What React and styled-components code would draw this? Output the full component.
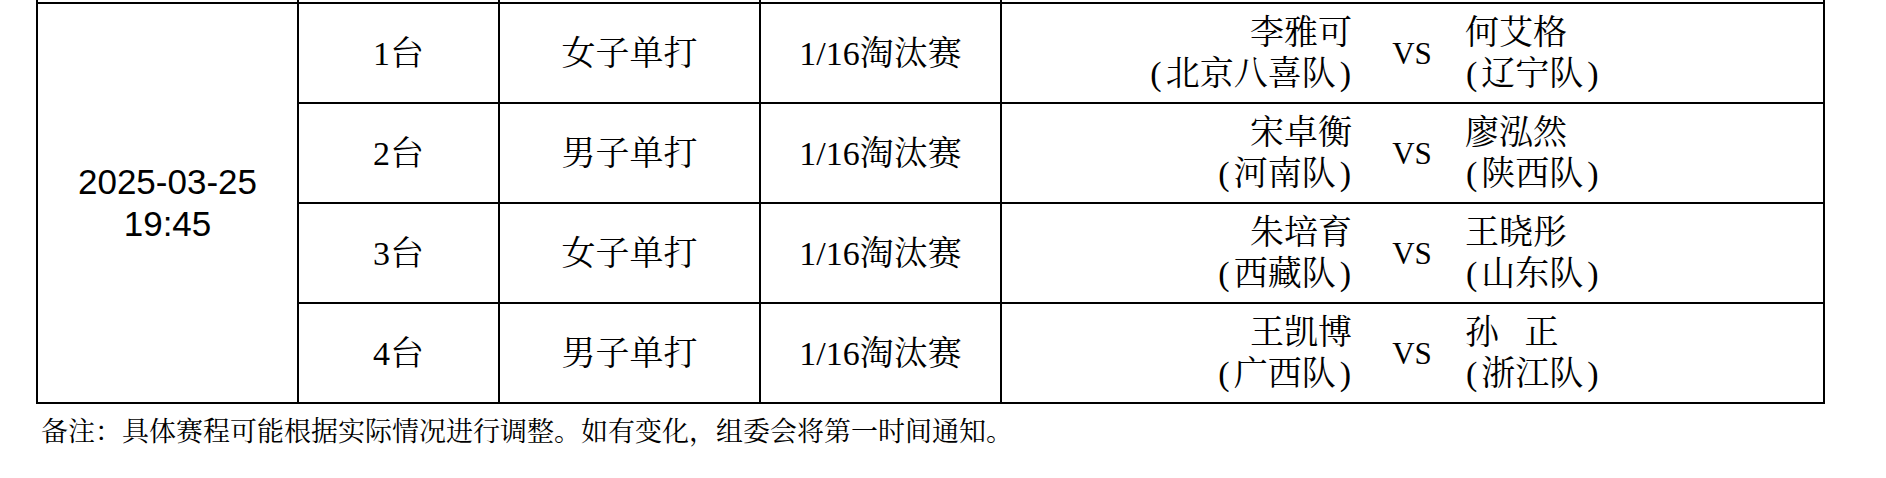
import React from 'react';
import styled, { createGlobalStyle } from 'styled-components';

const GlobalStyle = createGlobalStyle`
  html, body {
    margin: 0;
    padding: 0;
    background: #ffffff;
  }
`;

const Page = styled.div`
  width: 1886px;
  height: 478px;
  padding-left: 36px;
  box-sizing: border-box;
  color: #000;
  font-family: "Liberation Serif", "Noto Serif CJK SC", "Noto Sans CJK SC", serif;
`;

const Table = styled.table`
  border-collapse: collapse;
  table-layout: fixed;
  width: 1789px;
`;

const Cell = styled.td`
  border: 2px solid #000;
  border-top: ${(p) => (p.$stub ? 'none' : '2px solid #000')};
  border-left: ${(p) => (p.$joinLeft ? 'none' : '2px solid #000')};
  border-right: ${(p) => (p.$joinRight ? 'none' : '2px solid #000')};
  padding: 0;
  height: ${(p) => (p.$stub ? '2px' : '98px')};
  font-size: 34px;
  line-height: 41px;
  text-align: ${(p) => p.$align || 'center'};
  vertical-align: middle;
  white-space: pre;
`;

const DateCell = styled(Cell)`
  font-family: "Liberation Sans", "Noto Sans CJK SC", sans-serif;
  font-size: 35px;
  line-height: 42px;
`;

const VsCell = styled(Cell)`
  font-size: 31px;
`;

const NameLeft = styled(Cell)`
  padding-right: 10px;
`;

const NameRight = styled(Cell)`
  padding-left: 3px;
`;

const Paren = styled.span`
  padding: 0 ${(p) => (p.$close ? '1px 0 4px' : '4px 0 1px')};
`;

const Note = styled.p`
  margin: 12px 0 0 5px;
  font-size: 27px;
  line-height: 32px;
  font-family: "Liberation Serif", "Noto Serif CJK SC", "Noto Sans CJK SC", serif;
`;

function Team({ name }) {
  return (
    <>
      <Paren>(</Paren>
      {name}
      <Paren $close>)</Paren>
    </>
  );
}

const matches = [
  { table: '1台', event: '女子单打', home: '李雅可', homeTeam: '北京八喜队', away: '何艾格', awayTeam: '辽宁队' },
  { table: '2台', event: '男子单打', home: '宋卓衡', homeTeam: '河南队', away: '廖泓然', awayTeam: '陕西队' },
  { table: '3台', event: '女子单打', home: '朱培育', homeTeam: '西藏队', away: '王晓彤', awayTeam: '山东队' },
  { table: '4台', event: '男子单打', home: '王凯博', homeTeam: '广西队', away: '孙   正', awayTeam: '浙江队' },
];

export default function App() {
  return (
    <Page>
      <GlobalStyle />
      <Table>
        <colgroup>
          <col style={{ width: 261 }} />
          <col style={{ width: 201 }} />
          <col style={{ width: 261 }} />
          <col style={{ width: 241 }} />
          <col style={{ width: 361 }} />
          <col style={{ width: 100 }} />
          <col style={{ width: 362 }} />
        </colgroup>
        <tbody>
          <tr>
            <Cell $stub />
            <Cell $stub />
            <Cell $stub />
            <Cell $stub />
            <Cell $stub $joinRight />
            <Cell $stub $joinLeft $joinRight />
            <Cell $stub $joinLeft />
          </tr>
          {matches.map((m, i) => (
            <tr key={m.table}>
              {i === 0 && (
                <DateCell rowSpan={4}>
                  2025-03-25
                  <br />
                  19:45
                </DateCell>
              )}
              <Cell>{m.table}</Cell>
              <Cell>{m.event}</Cell>
              <Cell>1/16淘汰赛</Cell>
              <NameLeft $align="right" $joinRight>
                {m.home}
                <br />
                <Team name={m.homeTeam} />
              </NameLeft>
              <VsCell $joinLeft $joinRight>VS</VsCell>
              <NameRight $align="left" $joinLeft>
                {m.away}
                <br />
                <Team name={m.awayTeam} />
              </NameRight>
            </tr>
          ))}
        </tbody>
      </Table>
      <Note>备注：具体赛程可能根据实际情况进行调整。如有变化，组委会将第一时间通知。</Note>
    </Page>
  );
}
